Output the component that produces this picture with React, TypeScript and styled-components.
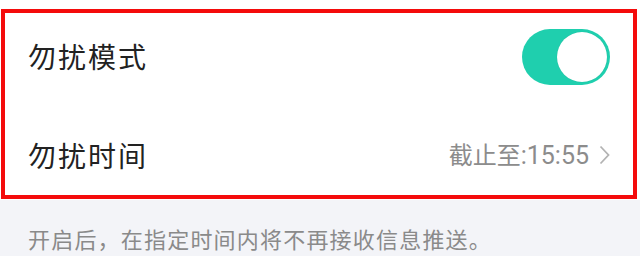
import * as React from 'react'
import styled, { createGlobalStyle } from 'styled-components'

const GlobalStyle = createGlobalStyle`
  html, body {
    margin: 0;
    padding: 0;
    background: #ffffff;
    font-family: "Noto Sans CJK SC", "Noto Sans", Roboto, sans-serif;
  }
`

const Page = styled.div`
  width: 640px;
  height: 256px;
  overflow: hidden;
  display: flex;
  flex-direction: column;
  background: #ffffff;
`

const Card = styled.div`
  margin: 9px 3px 1px 1px;
  border: 4px solid #f40b0b;
  background: #ffffff;
  display: flex;
  flex-direction: column;
`

const Row = styled.div<{ height: number; offset?: number }>`
  height: ${({ height }) => height}px;
  box-sizing: border-box;
  padding: ${({ offset = 0 }) => offset}px 23px 0 23px;
  display: flex;
  align-items: center;
  justify-content: space-between;
`

const Label = styled.span`
  font-size: 28px;
  line-height: 1;
  color: #222222;
  letter-spacing: 2px;
`

const Value = styled.span`
  display: flex;
  align-items: center;
  gap: 10px;
  font-size: 25px;
  line-height: 1;
  color: #8c8c8c;
  font-family: Roboto, "Noto Sans CJK SC", sans-serif;
`

const Prefix = styled.span`
  font-weight: 400;
  font-family: "Noto Sans CJK SC", sans-serif;
  font-size: 24px;
`

const Track = styled.div<{ on: boolean }>`
  width: 88px;
  height: 56px;
  border-radius: 28px;
  background: ${({ on }) => (on ? '#1fcfae' : '#e5e5e5')};
  display: flex;
  align-items: center;
  justify-content: ${({ on }) => (on ? 'flex-end' : 'flex-start')};
  margin-top: 2px;
`

const Knob = styled.div`
  width: 50px;
  height: 50px;
  border-radius: 50%;
  background: #ffffff;
  margin: 0 3px;
  box-shadow: 0 0 1px rgba(0, 0, 0, 0.15);
`

const Footer = styled.div`
  flex: 1;
  background: #f3f4f8;
  padding: 25px 0 0 28px;
  font-size: 22px;
  line-height: 26px;
  color: #8a8a8a;
  letter-spacing: 1.2px;
`

const Chevron = () => (
  <svg width="11" height="20" viewBox="0 0 11 20">
    <path d="M1.5 1.5 L9.5 10 L1.5 18.5" fill="none" stroke="#b3b3b3" strokeWidth="1.8" />
  </svg>
)

export default function App() {
  const [on, setOn] = React.useState(true)

  return (
    <Page>
      <GlobalStyle />
      <Card>
        <Row height={86}>
          <Label>勿扰模式</Label>
          <Track on={on} onClick={() => setOn(!on)}>
            <Knob />
          </Track>
        </Row>
        <Row height={96} offset={16}>
          <Label>勿扰时间</Label>
          <Value>
            <span><Prefix>截止至</Prefix>:15:55</span>
            <Chevron />
          </Value>
        </Row>
      </Card>
      <Footer>开启后，在指定时间内将不再接收信息推送。</Footer>
    </Page>
  )
}
